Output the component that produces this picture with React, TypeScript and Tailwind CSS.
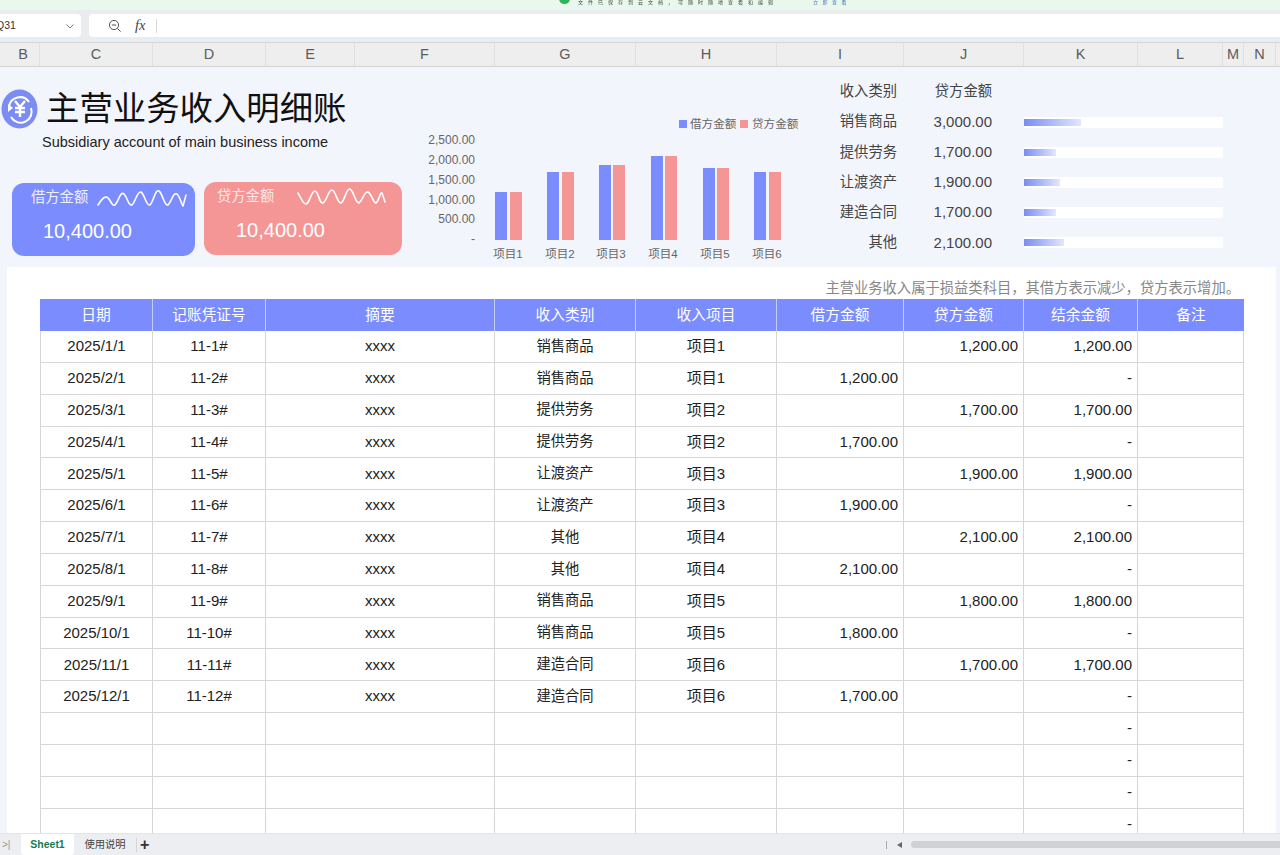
const FONT = "font-['Liberation_Sans','Noto_Sans_CJK_SC',sans-serif]";

const colHeads = [
  { l: "B", w: "w-[33px]" },
  { l: "C", w: "w-[113px]" },
  { l: "D", w: "w-[113px]" },
  { l: "E", w: "w-[89px]" },
  { l: "F", w: "w-[140px]" },
  { l: "G", w: "w-[141px]" },
  { l: "H", w: "w-[141px]" },
  { l: "I", w: "w-[127px]" },
  { l: "J", w: "w-[120px]" },
  { l: "K", w: "w-[114px]" },
  { l: "L", w: "w-[85px]" },
  { l: "M", w: "w-[21px]" },
  { l: "N", w: "w-[32px]" },
];

const tableCols = [113, 113, 229, 141, 141, 127, 120, 114, 106];
const heads = ["日期", "记账凭证号", "摘要", "收入类别", "收入项目", "借方金额", "贷方金额", "结余金额", "备注"];

const rows = [
  ["2025/1/1", "11-1#", "xxxx", "销售商品", "项目1", "", "1,200.00", "1,200.00"],
  ["2025/2/1", "11-2#", "xxxx", "销售商品", "项目1", "1,200.00", "", "-"],
  ["2025/3/1", "11-3#", "xxxx", "提供劳务", "项目2", "", "1,700.00", "1,700.00"],
  ["2025/4/1", "11-4#", "xxxx", "提供劳务", "项目2", "1,700.00", "", "-"],
  ["2025/5/1", "11-5#", "xxxx", "让渡资产", "项目3", "", "1,900.00", "1,900.00"],
  ["2025/6/1", "11-6#", "xxxx", "让渡资产", "项目3", "1,900.00", "", "-"],
  ["2025/7/1", "11-7#", "xxxx", "其他", "项目4", "", "2,100.00", "2,100.00"],
  ["2025/8/1", "11-8#", "xxxx", "其他", "项目4", "2,100.00", "", "-"],
  ["2025/9/1", "11-9#", "xxxx", "销售商品", "项目5", "", "1,800.00", "1,800.00"],
  ["2025/10/1", "11-10#", "xxxx", "销售商品", "项目5", "1,800.00", "", "-"],
  ["2025/11/1", "11-11#", "xxxx", "建造合同", "项目6", "", "1,700.00", "1,700.00"],
  ["2025/12/1", "11-12#", "xxxx", "建造合同", "项目6", "1,700.00", "", "-"],
  ["", "", "", "", "", "", "", "-"],
  ["", "", "", "", "", "", "", "-"],
  ["", "", "", "", "", "", "", "-"],
  ["", "", "", "", "", "", "", "-"],
];

const summary = [
  { name: "销售商品", amount: "3,000.00", fill: 57 },
  { name: "提供劳务", amount: "1,700.00", fill: 32 },
  { name: "让渡资产", amount: "1,900.00", fill: 36 },
  { name: "建造合同", amount: "1,700.00", fill: 32 },
  { name: "其他", amount: "2,100.00", fill: 40 },
];

function Wave({ d, w }: { d: string; w: number }) {
  return (
    <svg width={w} height="24" viewBox={`0 0 ${w} 24`} fill="none" stroke="#fff" strokeWidth="1.6" strokeLinecap="round" strokeLinejoin="round" className="block">
      <path d={d} />
    </svg>
  );
}

function Logo() {
  return (
    <svg width="37" height="40" viewBox="0 0 37 40" className="shrink-0">
      <ellipse cx="18.5" cy="20" rx="18" ry="19.5" fill="#7b8cf2" />
      <path d="M8 18 A11 11 0 0 1 28 13" fill="none" stroke="#fff" strokeWidth="2" />
      <path d="M7 23 L7 15 L12 19 Z" fill="#fff" />
      <path d="M30 19 A11 11 0 0 1 10 28" fill="none" stroke="#fff" strokeWidth="2" />
      <path d="M14 12 L19 18 L24 12 M14 19 H24 M14 23 H24 M19 18 V28" fill="none" stroke="#fff" strokeWidth="2.4" />
    </svg>
  );
}

function Chart() {
  const groups = [
    { x: 75, x2: 90, w: 12, v: 48, l: "项目1", c: 88 },
    { x: 127, x2: 142, w: 12, v: 68, l: "项目2", c: 140 },
    { x: 179, x2: 193, w: 12, v: 75, l: "项目3", c: 191 },
    { x: 231, x2: 245, w: 12, v: 84, l: "项目4", c: 243 },
    { x: 283, x2: 297, w: 12, v: 72, l: "项目5", c: 295 },
    { x: 334, x2: 349, w: 12, v: 68, l: "项目6", c: 347 },
  ];
  const ticks = [
    { t: "2,500.00", y: 73 },
    { t: "2,000.00", y: 93 },
    { t: "1,500.00", y: 113 },
    { t: "1,000.00", y: 133 },
    { t: "500.00", y: 152 },
    { t: "-", y: 172 },
  ];
  return (
    <svg width="380" height="200" viewBox="0 0 380 200" className="block">
      <rect x="259" y="53" width="8" height="8" fill="#7b8cff" />
      <text x="270" y="60.5" fontSize="11.6" fill="#666">借方金额</text>
      <rect x="320" y="53" width="8" height="8" fill="#f49596" />
      <text x="332" y="60.5" fontSize="11.6" fill="#666">贷方金额</text>
      {ticks.map((t) => (
        <text key={t.t} x="55" y={t.y + 4} fontSize="12" fill="#666" textAnchor="end">{t.t}</text>
      ))}
      {groups.map((g) => (
        <g key={g.l}>
          <rect x={g.x} y={173 - g.v} width={g.w} height={g.v} fill="#7b8cff" />
          <rect x={g.x2} y={173 - g.v} width={g.w} height={g.v} fill="#f49596" />
          <text x={g.c} y="191" fontSize="11.5" fill="#666" textAnchor="middle">{g.l}</text>
        </g>
      ))}
    </svg>
  );
}

export default function App() {
  return (
    <div className={`${FONT} flex h-[855px] w-[1280px] flex-col overflow-hidden bg-white text-[#222]`}>
      <div className="flex h-[10px] shrink-0 items-start overflow-hidden bg-[#e9f7ec] pl-[559px]">
        <span className="-mt-[7px] h-[11px] w-[11px] shrink-0 rounded-full bg-[#2fb457]" />
        <span className="ml-[8px] whitespace-nowrap text-[5px] leading-[5px] tracking-[5px] text-[#444] blur-[0.4px]">文件已保存到云文档，可随时随地查看和编辑</span>
        <span className="ml-[35px] whitespace-nowrap text-[5px] leading-[5px] tracking-[4.5px] text-[#4a78c0] blur-[0.4px]">立即查看</span>
      </div>

      <div className="flex h-[33px] shrink-0 items-center gap-[8px] border-b border-[#d4d6da] bg-[#eaedf0] pb-[5px] pt-[4px]">
        <div className="flex h-[23px] w-[81px] items-center justify-between overflow-hidden rounded-r-[4px] bg-white pr-[6px] text-[10.5px] text-[#333]">
          <span className="-ml-[4px]">Q31</span>
          <svg width="10" height="10" viewBox="0 0 10 10" fill="none" stroke="#777" strokeWidth="1">
            <path d="M1.5 3.5 L5 7 L8.5 3.5" />
          </svg>
        </div>
        <div className="flex h-[23px] flex-1 items-center rounded-l-[4px] bg-white pl-[19px]">
          <svg width="14" height="14" viewBox="0 0 14 14" fill="none" stroke="#555" strokeWidth="1">
            <circle cx="6" cy="6" r="4.6" />
            <path d="M3.8 6 H8.2 M9.5 9.5 L12.6 12.6" />
          </svg>
          <span className="ml-[13px] font-['Liberation_Serif',serif] text-[14.5px] italic text-[#444]">fx</span>
          <span className="ml-[11px] h-[14px] w-px bg-[#d8d8d8]" />
        </div>
      </div>

      <div className="flex h-[24px] shrink-0 border-b border-[#d4d4d4] bg-[#eeeeee] pl-[7px] text-[14.5px] text-[#5c5c5c]">
        {colHeads.map((c) => (
          <div key={c.l} className={`${c.w} flex items-center justify-center border-r border-[#e0e0e0]`}>{c.l}</div>
        ))}
      </div>

      <div className="flex h-[200px] shrink-0 bg-[#f3f5fd]">
        <div className="flex w-[420px] shrink-0 flex-col">
          <div className="flex h-[62px] items-end pl-[1px]">
            <Logo />
            <span className="ml-[8px] whitespace-nowrap text-[33.4px] leading-[40px] text-[#111]">主营业务收入明细账</span>
          </div>
          <div className="pl-[42px] pt-[3px] text-[14.5px] leading-[20px] text-[#222]">Subsidiary account of main business income</div>
          <div className="flex items-start gap-[9px] pl-[12px] pt-[30px] text-white">
            <div className="mt-[1px] h-[73px] w-[183px] rounded-[12px] bg-[#7b8cff] pl-[19px] pt-[3px]">
              <div className="flex items-center">
                <span className="text-[14.3px] text-[#eef0ff]">借方金额</span>
                <span className="ml-[9px]">
                  <Wave w={90} d="M1 19 C6 11 9 9 12 13 C15 18 16 20 18 19 C22 15 23 5 27 8 C31 12 31 20 35 19 C39 15 40 5 44 6 C48 9 49 20 53 19 C57 15 58 3 62 5 C66 8 67 20 71 19 C75 15 76 6 80 8 C83 11 84 17 86 20 L89 9" />
                </span>
              </div>
              <div className="pl-[12px] pt-[7px] text-[20px] leading-[28px]">10,400.00</div>
            </div>
            <div className="h-[73px] w-[198px] rounded-[12px] bg-[#f49596] pl-[13px] pt-[3px]">
              <div className="flex items-center">
                <span className="text-[14.3px] text-[#fde6e6]">贷方金额</span>
                <span className="ml-[23px]">
                  <Wave w={90} d="M1 8 C4 13 6 19 9 19 C13 18 14 6 18 6 C22 7 22 19 26 18 C30 16 31 5 35 5 C39 6 40 18 44 18 C48 16 49 3 53 4 C57 6 58 18 62 18 C66 15 67 6 71 7 C75 9 76 18 79 18 C82 16 83 7 85 8 L88 17" />
                </span>
              </div>
              <div className="pl-[19px] pt-[7px] text-[20px] leading-[28px]">10,400.00</div>
            </div>
          </div>
        </div>

        <div className="w-[400px] shrink-0">
          <Chart />
        </div>

        <div className="flex w-[403px] shrink-0 flex-col pt-[9px] text-[14.3px] text-[#444]">
          <div className="flex h-[31px] items-center">
            <span className="w-[77px] text-right">收入类别</span>
            <span className="w-[95px] text-right">贷方金额</span>
          </div>
          {summary.map((s) => (
            <div key={s.name} className="flex h-[30.2px] items-center">
              <span className="w-[77px] text-right">{s.name}</span>
              <span className="w-[95px] text-right text-[15px]">{s.amount}</span>
              <span className="ml-[32px] flex h-[11px] w-[199px] items-center bg-white">
                <span className="h-[7px] bg-gradient-to-r from-[#7b8cf2] to-[#e4e7fb]" style={{ width: s.fill }} />
              </span>
            </div>
          ))}
        </div>
      </div>

      <div className="flex min-h-0 flex-1 bg-[#f3f5fd]">
        <div className="ml-[7px] min-h-0 w-[1269px] overflow-hidden bg-white pl-[33px]">
          <div className="flex h-[32px] w-[1204px] items-end justify-end pb-[1px] pr-[4px] text-[14.3px] leading-[20px] text-[#888]">
            主营业务收入属于损益类科目，其借方表示减少，贷方表示增加。
          </div>
          <div className="w-[1204px]">
            <div className="flex h-[32px] bg-[#7b8cff] text-[14.7px] text-white">
              {heads.map((h, i) => (
                <div key={h} style={{ width: tableCols[i] }} className="flex items-center justify-center border-r border-[#c5cdfb] last:border-r-0">{h}</div>
              ))}
            </div>
            {rows.map((r, ri) => (
              <div key={ri} className="flex h-[31.85px] border-b border-[#d6d6d6] text-[15px] text-[#222]">
                {tableCols.map((w, i) => {
                  const v = r[i] ?? "";
                  const right = i >= 5 && i <= 7;
                  const cjk = i === 3;
                  return (
                    <div
                      key={i}
                      style={{ width: w }}
                      className={`flex items-center border-r border-[#d6d6d6] first:border-l ${right ? "justify-end pr-[5px]" : "justify-center"} ${cjk ? "text-[14.3px]" : ""}`}
                    >
                      {v}
                    </div>
                  );
                })}
              </div>
            ))}
          </div>
        </div>
      </div>

      <div className="flex h-[22px] shrink-0 items-center border-t border-[#e2e4e8] bg-[#eceef2]">
        <span className="ml-[2px] w-[19px] text-[10px] text-[#999]">&gt;|</span>
        <span className="flex h-[22px] w-[53px] items-center justify-center rounded-b-[5px] bg-white text-[10.5px] font-bold text-[#1a7a52]">Sheet1</span>
        <span className="w-[62px] text-center text-[10.3px] text-[#444]">使用说明</span>
        <span className="h-[14px] w-px bg-[#d4d6da]" />
        <span className="ml-[3px] text-[16px] font-bold leading-none text-[#333]">+</span>
        <div className="ml-auto flex items-center">
          <span className="h-[8px] w-px bg-[#aaa]" />
          <span className="ml-[10px] h-0 w-0 border-y-[3px] border-r-[5px] border-y-transparent border-r-[#666]" />
          <span className="ml-[9px] h-[7px] w-[369px] rounded-l-[4px] bg-[#cfd1d5]" />
        </div>
      </div>
    </div>
  );
}
